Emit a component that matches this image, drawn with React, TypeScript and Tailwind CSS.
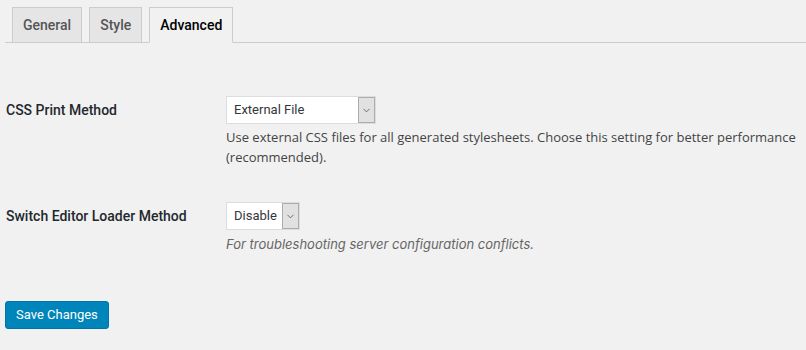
import { ChevronDown } from 'lucide-react';

const tabs = ['General', 'Style', 'Advanced'];

const FakeSelect = ({ value, width }: { value: string; width: string }) => (
  <div className={`flex h-[28px] ${width} items-stretch border border-[#dddddd] bg-white`}>
    <span className="flex-1 pl-[7px] text-[13px] leading-[26px] text-[#32373c]">{value}</span>
    <span className="flex w-[17px] items-center justify-center border border-[#adadad] bg-[#e1e1e1]">
      <ChevronDown className="h-[11px] w-[11px] text-[#444]" strokeWidth={1.6} />
    </span>
  </div>
);

const App = () => {
  const active = 'Advanced';

  return (
    <div className="min-h-[350px] w-[806px] bg-[#f1f1f1] pl-[5px] font-['Roboto',sans-serif] text-[13px] text-[#444]">
      <div className="flex gap-[7px] border-b border-[#cccccc] pl-[7px] pt-[7px]">
        {tabs.map((tab) => (
          <div
            key={tab}
            className={`-mb-px border px-[10px] py-[5px] text-[14px] font-medium leading-[24px] ${
              tab === active
                ? 'border-[#cccccc] border-b-[#f1f1f1] bg-[#f1f1f1] text-black'
                : 'border-[#cccccc] bg-[#e5e5e5] text-[#555]'
            }`}
          >
            {tab}
          </div>
        ))}
      </div>

      <div className="mt-[53px] flex">
        <div className="w-[221px] pl-px text-[14px] font-medium leading-[28px] text-[#23282d]">CSS Print Method</div>
        <div className="flex-1">
          <FakeSelect value="External File" width="w-[150px]" />
          <p className="mt-[4px] pr-[4px] font-['Open_Sans',sans-serif] leading-[19.5px] text-[#444]">
            Use external CSS files for all generated stylesheets. Choose this setting for better performance (recommended).
          </p>
        </div>
      </div>

      <div className="mt-[35px] flex">
        <div className="w-[221px] pl-px text-[14px] font-medium leading-[28px] text-[#23282d]">Switch Editor Loader Method</div>
        <div className="flex-1">
          <FakeSelect value="Disable" width="w-[74px]" />
          <p className="mt-[5px] font-['Inter',sans-serif] italic leading-[19.5px] text-[#666]">
            For troubleshooting server configuration conflicts.
          </p>
        </div>
      </div>

      <button className="mt-[46px] h-[28px] rounded-[3px] border border-[#0073aa] bg-[#0085ba] px-[10px] text-[13px] leading-[26px] text-white">
        Save Changes
      </button>
    </div>
  );
};

export default App;
